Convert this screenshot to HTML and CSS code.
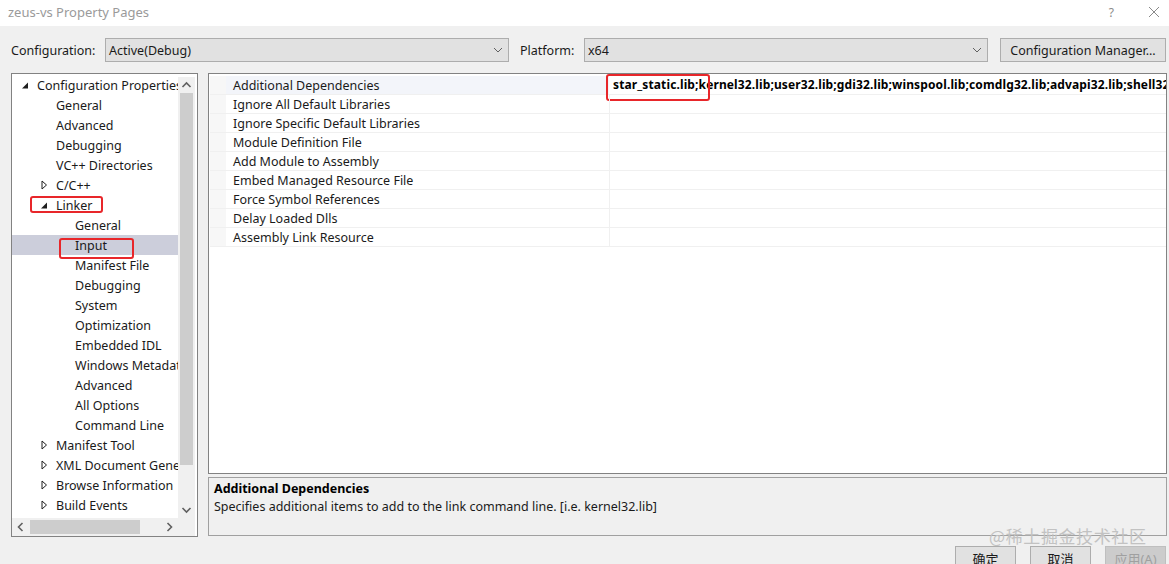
FILE: index.html
```html
<!DOCTYPE html>
<html>
<head>
<meta charset="utf-8">
<title>zeus-vs Property Pages</title>
<link rel="stylesheet" href="styles.css">
</head>
<body>
<div class="window">
  <div class="titlebar">
    <span class="title">zeus-vs Property Pages</span>
    <span class="tb-btns"><span class="help">?</span>
      <svg class="close" width="12" height="12" viewBox="0 0 12 12"><path d="M1 1L11 11M11 1L1 11" stroke="#8a8a8a" stroke-width="1" fill="none"/></svg>
    </span>
  </div>
  <div class="toolbar">
    <span class="lbl">Configuration:</span>
    <div class="combo combo-config"><span>Active(Debug)</span>
      <svg class="chev" width="10" height="6" viewBox="0 0 10 6"><path d="M1 1L5 5L9 1" stroke="#606060" fill="none"/></svg></div>
    <span class="lbl lbl-plat">Platform:</span>
    <div class="combo combo-plat"><span>x64</span>
      <svg class="chev" width="10" height="6" viewBox="0 0 10 6"><path d="M1 1L5 5L9 1" stroke="#606060" fill="none"/></svg></div>
    <button class="btn btn-cm">Configuration Manager...</button>
  </div>
  <div class="content">
    <div class="tree">
      <div class="tree-main">
        <div class="tree-list">
          <div class="row lvl0"><span class="arr"><svg width="7" height="7" viewBox="0 0 7 7"><path d="M6 0.5V6.5H0Z" fill="#1e1e1e"/></svg></span>Configuration Properties</div>
          <div class="row lvl1"><span class="arr"></span>General</div>
          <div class="row lvl1"><span class="arr"></span>Advanced</div>
          <div class="row lvl1"><span class="arr"></span>Debugging</div>
          <div class="row lvl1"><span class="arr"></span>VC++ Directories</div>
          <div class="row lvl1"><span class="arr"><svg width="7" height="10" viewBox="0 0 7 10"><path d="M1 1L5.5 5L1 9Z" fill="none" stroke="#1e1e1e"/></svg></span>C/C++</div>
          <div class="row lvl1"><span class="arr"><svg width="7" height="7" viewBox="0 0 7 7"><path d="M6 0.5V6.5H0Z" fill="#1e1e1e"/></svg></span>Linker<span class="mark mark-linker"></span></div>
          <div class="row lvl2"><span class="arr"></span>General</div>
          <div class="row lvl2 sel"><span class="arr"></span>Input<span class="mark mark-input"></span></div>
          <div class="row lvl2"><span class="arr"></span>Manifest File</div>
          <div class="row lvl2"><span class="arr"></span>Debugging</div>
          <div class="row lvl2"><span class="arr"></span>System</div>
          <div class="row lvl2"><span class="arr"></span>Optimization</div>
          <div class="row lvl2"><span class="arr"></span>Embedded IDL</div>
          <div class="row lvl2"><span class="arr"></span>Windows Metadata</div>
          <div class="row lvl2"><span class="arr"></span>Advanced</div>
          <div class="row lvl2"><span class="arr"></span>All Options</div>
          <div class="row lvl2"><span class="arr"></span>Command Line</div>
          <div class="row lvl1"><span class="arr"><svg width="7" height="10" viewBox="0 0 7 10"><path d="M1 1L5.5 5L1 9Z" fill="none" stroke="#1e1e1e"/></svg></span>Manifest Tool</div>
          <div class="row lvl1"><span class="arr"><svg width="7" height="10" viewBox="0 0 7 10"><path d="M1 1L5.5 5L1 9Z" fill="none" stroke="#1e1e1e"/></svg></span>XML Document Generator</div>
          <div class="row lvl1"><span class="arr"><svg width="7" height="10" viewBox="0 0 7 10"><path d="M1 1L5.5 5L1 9Z" fill="none" stroke="#1e1e1e"/></svg></span>Browse Information</div>
          <div class="row lvl1"><span class="arr"><svg width="7" height="10" viewBox="0 0 7 10"><path d="M1 1L5.5 5L1 9Z" fill="none" stroke="#1e1e1e"/></svg></span>Build Events</div>
        </div>
        <div class="vscroll">
          <svg class="sarrow" width="17" height="16" viewBox="0 0 17 16"><path d="M4.5 10L8.5 6L12.5 10" stroke="#606060" stroke-width="1.6" fill="none"/></svg>
          <div class="vtrack"><div class="vthumb"></div></div>
          <svg class="sarrow" width="17" height="16" viewBox="0 0 17 16"><path d="M4.5 6L8.5 10L12.5 6" stroke="#606060" stroke-width="1.6" fill="none"/></svg>
        </div>
      </div>
      <div class="hscroll">
        <svg class="sarrow" width="17" height="18" viewBox="0 0 17 18"><path d="M10.5 5L6.5 9L10.5 13" stroke="#606060" stroke-width="1.6" fill="none"/></svg>
        <div class="htrack"><div class="hthumb"></div></div>
        <svg class="sarrow" width="17" height="18" viewBox="0 0 17 18"><path d="M6.5 5L10.5 9L6.5 13" stroke="#606060" stroke-width="1.6" fill="none"/></svg>
        <div class="corner"></div>
      </div>
    </div>
    <div class="right">
      <div class="grid">
        <div class="prow first"><div class="gut"></div><div class="pname">Additional Dependencies</div><div class="pval">star_static.lib;kernel32.lib;user32.lib;gdi32.lib;winspool.lib;comdlg32.lib;advapi32.lib;shell32.lib;ole32.lib;oleaut32.lib;uuid.lib</div><span class="mark mark-val"></span></div>
        <div class="prow"><div class="gut"></div><div class="pname">Ignore All Default Libraries</div><div class="pval"></div></div>
        <div class="prow"><div class="gut"></div><div class="pname">Ignore Specific Default Libraries</div><div class="pval"></div></div>
        <div class="prow"><div class="gut"></div><div class="pname">Module Definition File</div><div class="pval"></div></div>
        <div class="prow"><div class="gut"></div><div class="pname">Add Module to Assembly</div><div class="pval"></div></div>
        <div class="prow"><div class="gut"></div><div class="pname">Embed Managed Resource File</div><div class="pval"></div></div>
        <div class="prow"><div class="gut"></div><div class="pname">Force Symbol References</div><div class="pval"></div></div>
        <div class="prow"><div class="gut"></div><div class="pname">Delay Loaded Dlls</div><div class="pval"></div></div>
        <div class="prow"><div class="gut"></div><div class="pname">Assembly Link Resource</div><div class="pval"></div></div>
      </div>
      <div class="desc">
        <div class="desc-title">Additional Dependencies</div>
        <div class="desc-text">Specifies additional items to add to the link command line. [i.e. kernel32.lib]</div>
      </div>
    </div>
  </div>
  <div class="footer">
    <button class="btn btn-f">确定</button>
    <button class="btn btn-f">取消</button>
    <button class="btn btn-f disabled">应用(A)</button>
  </div>
  <div class="watermark">@稀土掘金技术社区</div>
</div>
</body>
</html>
```

FILE: styles.css
```css
* { box-sizing: border-box; }
html, body { margin: 0; padding: 0; }
body {
  width: 1169px;
  height: 564px;
  overflow: hidden;
  background: #f0f0f0;
  font-family: "Noto Sans", "Noto Sans CJK SC", sans-serif;
  font-size: 12px;
  color: #1a1a1a;
}
.window { position: relative; width: 1169px; height: 564px; }
.titlebar {
  height: 26px;
  background: #ffffff;
  display: flex;
  align-items: center;
  justify-content: space-between;
  padding: 0 9px 2px 8px;
}
.title { color: #9a9a9a; font-size: 13px; }
.tb-btns { display: flex; align-items: center; gap: 34px; }
.help { color: #8a8a8a; font-size: 12px; }
.toolbar {
  display: flex;
  align-items: center;
  margin-top: 12px;
  height: 24px;
  padding-left: 11px;
}
.lbl { width: 94px; font-size: 12.5px; }
.lbl-plat { width: 64px; margin-left: 11px; }
.combo {
  height: 24px;
  background: #e1e1e1;
  border: 1px solid #adadad;
  display: flex;
  align-items: center;
  justify-content: space-between;
  padding: 0 5px 0 3px;
  font-size: 12.5px;
}
.combo-config { width: 404px; }
.combo-plat { width: 404px; }
.btn {
  font-family: "Noto Sans", "Noto Sans CJK SC", sans-serif;
  background: #e1e1e1;
  border: 1px solid #adadad;
  color: #1a1a1a;
  font-size: 12.5px;
  padding: 0;
  height: 24px;
}
.btn-cm { width: 166px; margin-left: 12px; }
.content {
  display: flex;
  margin-top: 11px;
  padding-left: 11px;
  gap: 10px;
}
.tree {
  width: 187px;
  height: 464px;
  border: 1px solid #828282;
  background: #ffffff;
  display: flex;
  flex-direction: column;
}
.tree-main { display: flex; flex: 1; min-height: 0; }
.tree-list { width: 166px; overflow: hidden; padding-top: 1px; }
.row {
  height: 20px;
  display: flex;
  align-items: center;
  white-space: nowrap;
  position: relative;
  font-size: 12.5px;
}
.row.sel { background: #cccedb; }
.lvl0 { padding-left: 10px; }
.lvl1 { padding-left: 29px; }
.lvl2 { padding-left: 48px; }
.arr { width: 15px; flex: none; display: flex; align-items: center; }
.vscroll {
  width: 17px;
  background: #f0f0f0;
  display: flex;
  flex-direction: column;
  margin-top: 3px;
}
.sarrow { display: block; flex: none; }
.vtrack { flex: 1; padding: 0 2px; }
.vthumb { margin-top: 0px; height: 372px; background: #cdcdcd; }
.hscroll {
  height: 18px;
  display: flex;
  background: #f0f0f0;
  margin-right: 2px;
}
.htrack { width: 132px; padding: 2px 0; }
.hthumb { margin-left: 1px; width: 110px; height: 14px; background: #cdcdcd; }
.corner { width: 17px; background: #f0f0f0; }
.right { width: 959px; display: flex; flex-direction: column; gap: 3px; }
.grid {
  height: 401px;
  border: 1px solid #828282;
  background: #ffffff;
  padding: 2px 0 0 1px;
  overflow: hidden;
}
.prow {
  height: 19px;
  display: flex;
  position: relative;
  border-bottom: 1px solid #f0f0f0;
}
.gut { width: 16px; background: #f7f7f7; flex: none; }
.pname {
  width: 383px;
  flex: none;
  padding-left: 7px;
  line-height: 19px;
  white-space: nowrap;
  font-size: 12.5px;
}
.prow.first .pname { background: #f3f5fa; }
.pval {
  flex: 1;
  border-left: 1px solid #f0f0f0;
  padding-left: 3px;
  line-height: 18px;
  white-space: nowrap;
  overflow: hidden;
  font-weight: bold;
  font-size: 12px;
  letter-spacing: 0.12px;
  color: #000;
}
.prow.first .pval { border-left-color: #ffffff; }
.desc {
  height: 59px;
  border: 1px solid #a0a0a0;
  background: #f0f0f0;
  padding: 2px 5px;
}
.desc-title { font-weight: bold; line-height: 18px; font-size: 12.5px; color: #000; }
.desc-text { line-height: 18px; font-size: 12.5px; }
.footer {
  display: flex;
  justify-content: flex-end;
  gap: 14px;
  margin-top: 9px;
  padding-right: 3px;
}
.btn-f { width: 61px; font-size: 13px; }
.btn-f.disabled { color: #a0a0a0; background: #cccccc; border-color: #bfbfbf; }
.mark {
  position: absolute;
  border: 2px solid #e8262a;
  border-radius: 3px;
  pointer-events: none;
}
.mark-linker { left: 18px; top: 1px; width: 73px; height: 17px; }
.mark-input { left: 47px; top: 3px; width: 75px; height: 21px; }
.mark-val { left: 396px; top: -2px; width: 104px; height: 27px; }
.watermark {
  position: absolute;
  left: 989px;
  top: 523px;
  font-size: 17px;
  color: #c2c2c2;
  font-family: "Noto Sans CJK SC", sans-serif;
  letter-spacing: 0.6px;
}
```
